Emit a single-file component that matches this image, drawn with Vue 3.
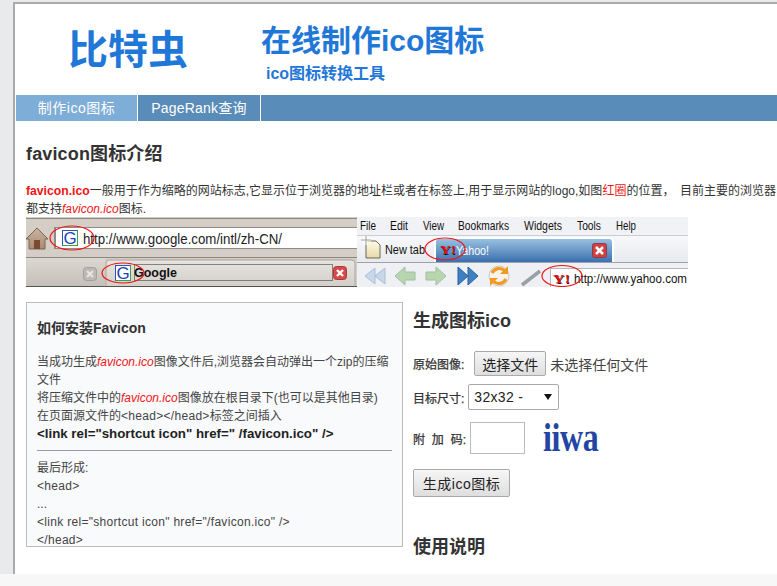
<template>
  <div class="page">
    <div class="shell">
      <div class="frame">
        <header class="masthead">
          <div class="brand">比特虫</div>
          <div class="titles">
            <h1>在线制作ico图标</h1>
            <h2>ico图标转换工具</h2>
          </div>
        </header>
        <nav class="nav">
          <a class="nav-item active">制作ico图标</a>
          <a class="nav-item second">PageRank查询</a>
        </nav>
        <main class="content">
          <h3 class="section-title intro-title">favicon图标介绍</h3>
          <p class="intro">
            <b class="red lead">favicon.ico</b>一般用于作为缩略的网站标志,它显示位于浏览器的地址栏或者在标签上,用于显示网站的logo,如图<span class="red">红圈</span>的位置，&nbsp; 目前主要的浏览器<br />都支持<i class="red">favicon.ico</i>图标.
          </p>
          <div class="shots">
            <svg class="shot" width="331" height="70" viewBox="0 0 331 70">
              <defs>
                <linearGradient id="tabOff" x1="0" y1="0" x2="0" y2="1"><stop offset="0" stop-color="#dcd8d2" /><stop offset="1" stop-color="#c4bfb8" /></linearGradient>
                <linearGradient id="tabOn" x1="0" y1="0" x2="0" y2="1"><stop offset="0" stop-color="#e8e5e0" /><stop offset="1" stop-color="#d2cec8" /></linearGradient>
                <linearGradient id="house" x1="0" y1="0" x2="0" y2="1"><stop offset="0" stop-color="#c9b4a0" /><stop offset="1" stop-color="#a98b72" /></linearGradient>
              </defs>
              <rect width="331" height="70" fill="#d4cec7" />
              <rect y="1" width="331" height="1" fill="#8c8882" />
              <rect x="28" y="10" width="303" height="22" fill="#8f8c88" />
              <rect x="30" y="11" width="301" height="20" fill="#fff" />
              <path d="M0 22 L11 11 L22 22 L19 22 L19 32 L3 32 L3 22 Z" fill="url(#house)" stroke="#7d6650" />
              <rect x="8" y="23" width="6" height="9" fill="#7a4a33" />
              <rect x="36.5" y="13.5" width="15" height="15" fill="#fff" stroke="#2a57b8" />
              <path d="M51.5 13.5 V28.5 H36.5" fill="none" stroke="#3aa34a" />
              <text class="g" x="37.5" y="27">G</text>
              <text class="url" x="57" y="27" textLength="199" lengthAdjust="spacingAndGlyphs">http://www.google.com/intl/zh-CN/</text>
              <rect y="40" width="331" height="1" fill="#8c8882" />
              <rect y="41" width="79" height="28" fill="url(#tabOff)" />
              <rect x="57.5" y="50.5" width="13" height="13" rx="3" fill="#bcb8b2" stroke="#a3a09a" />
              <path d="M61 54 L67 60 M67 54 L61 60" stroke="#e6e4e0" stroke-width="2.4" />
              <path d="M80 69 V46 Q80 43 83 43 H325 Q329 43 329 46 V69" fill="url(#tabOn)" stroke="#a9a69f" />
              <rect x="89.5" y="48.5" width="15" height="15" fill="#fff" stroke="#2a57b8" />
              <path d="M104.5 48.5 V63.5 H89.5" fill="none" stroke="#3aa34a" />
              <text class="g" x="90.5" y="62">G</text>
              <rect x="108.5" y="47.5" width="198" height="16" fill="none" stroke="#222" stroke-dasharray="1 1" />
              <text class="google" x="108" y="60" textLength="43" lengthAdjust="spacingAndGlyphs">Google</text>
              <rect x="307.5" y="49.5" width="13" height="13" rx="3" fill="#d84a4a" stroke="#a83a3a" />
              <path d="M311 53 L317 59 M317 53 L311 59" stroke="#fff" stroke-width="2.4" />
              <rect y="69" width="331" height="1" fill="#55524e" />
              <ellipse cx="46" cy="21" rx="22" ry="12" fill="none" stroke="#f01414" stroke-width="1.2" />
              <ellipse cx="97" cy="56" rx="21" ry="10" fill="none" stroke="#f01414" stroke-width="1.2" />
            </svg>
            <svg class="shot" width="331" height="70" viewBox="0 0 331 70">
              <defs>
                <linearGradient id="blueTab" x1="0" y1="0" x2="0" y2="1"><stop offset="0" stop-color="#9cc4e2" /><stop offset="1" stop-color="#3b6fae" /></linearGradient>
                <linearGradient id="pageIcon" x1="0" y1="0" x2="0" y2="1"><stop offset="0" stop-color="#fdfbe8" /><stop offset="1" stop-color="#e8d9a6" /></linearGradient>
                <linearGradient id="barBg" x1="0" y1="0" x2="0" y2="1"><stop offset="0" stop-color="#f7f8fa" /><stop offset="1" stop-color="#e8eaee" /></linearGradient>
              </defs>
              <rect width="331" height="18" fill="#f1f2f6" />
              <rect y="18" width="331" height="1" fill="#c9ccd2" />
              <rect y="19" width="331" height="26" fill="url(#barBg)" />
              <rect y="46" width="331" height="24" fill="#eef0f3" />
              <rect y="45" width="331" height="1" fill="#9da3ab" />
              <text class="menu" x="3" y="13" textLength="16" lengthAdjust="spacingAndGlyphs">File</text>
              <text class="menu" x="33" y="13" textLength="18" lengthAdjust="spacingAndGlyphs">Edit</text>
              <text class="menu" x="66" y="13" textLength="21" lengthAdjust="spacingAndGlyphs">View</text>
              <text class="menu" x="101" y="13" textLength="51" lengthAdjust="spacingAndGlyphs">Bookmarks</text>
              <text class="menu" x="167" y="13" textLength="38" lengthAdjust="spacingAndGlyphs">Widgets</text>
              <text class="menu" x="220" y="13" textLength="24" lengthAdjust="spacingAndGlyphs">Tools</text>
              <text class="menu" x="259" y="13" textLength="20" lengthAdjust="spacingAndGlyphs">Help</text>
              <path d="M9 24 H19 L23 28 V41 H9 Z" fill="url(#pageIcon)" stroke="#6d675a" />
              <path d="M4 23 H14 M9 19 V28" stroke="#fff" stroke-width="3" />
              <path d="M4 23 H14 M9 19 V28" stroke="#9a9a9a" stroke-width="1" />
              <text class="menu" x="28" y="37" textLength="40" lengthAdjust="spacingAndGlyphs">New tab</text>
              <path d="M78 45 V25 Q78 21 82 21 H252 Q256 21 256 25 V45" fill="url(#blueTab)" stroke="#fff" stroke-width="2" />
              <text class="yahoo" x="99" y="38" textLength="33" lengthAdjust="spacingAndGlyphs">Yahoo!</text>
              <rect x="235.5" y="26.5" width="14" height="14" rx="2" fill="#cf4040" stroke="#8f3a4a" />
              <path d="M239 30 L246 37 M246 30 L239 37" stroke="#fff" stroke-width="2.6" />
              <text class="yshadow" x="83.5" y="38" textLength="16" lengthAdjust="spacingAndGlyphs">Y!</text>
              <text class="yicon" x="83" y="37" textLength="16" lengthAdjust="spacingAndGlyphs">Y!</text>
              <g stroke="#a7bdd6" fill="#c6d8ea">
                <path d="M18 51 L8 59 L18 67 Z M28 51 L18 59 L28 67 Z" />
              </g>
              <path d="M38 59 L48 50 V55 H58 V63 H48 V68 Z" fill="#b7d6b0" stroke="#a4bca2" />
              <path d="M89 59 L79 50 V55 H69 V63 H79 V68 Z" fill="#b7d6b0" stroke="#a4bca2" />
              <g stroke="#2a5f9e" fill="#3f80c4">
                <path d="M101 50 L111 59 L101 68 Z M111 50 L121 59 L111 68 Z" />
              </g>
              <circle cx="142" cy="59" r="10" fill="#f7f3ea" stroke="#c9c9c9" />
              <path d="M135 56 A8 8 0 0 1 148 54 M149 62 A8 8 0 0 1 136 64" fill="none" stroke="#f09a22" stroke-width="3.2" />
              <path d="M151 49 V57 H143 Z M133 69 V61 H141 Z" fill="#f09a22" />
              <path d="M165 68 L183 54" stroke="#9aa0a8" stroke-width="3.5" />
              <rect x="193" y="51" width="138" height="19" fill="#fff" />
              <path d="M193.5 70 V51.5 H331" fill="none" stroke="#b2b6bc" />
              <text class="yshadow" x="196.5" y="67" textLength="17" lengthAdjust="spacingAndGlyphs">Y!</text>
              <text class="yicon" x="196" y="66" textLength="17" lengthAdjust="spacingAndGlyphs">Y!</text>
              <text class="url-y" x="217" y="66" textLength="113" lengthAdjust="spacingAndGlyphs">http://www.yahoo.com</text>
              <ellipse cx="88" cy="32" rx="20" ry="11" fill="none" stroke="#f01414" stroke-width="1.2" />
              <ellipse cx="205" cy="59" rx="20" ry="10.5" fill="none" stroke="#f01414" stroke-width="1.2" />
            </svg>
          </div>
          <div class="columns">
            <section class="howto">
              <h4>如何安装Favicon</h4>
              <div class="howto-lines">
                当成功生成<i class="red">favicon.ico</i>图像文件后,浏览器会自动弹出一个zip的压缩文件<br />
                将压缩文件中的<i class="red">favicon.ico</i>图像放在根目录下(也可以是其他目录)<br />
                在页面源文件的<span class="latin">&lt;head&gt;&lt;/head&gt;</span>标签之间插入<br />
                <b class="code">&lt;link rel="shortcut icon" href=" /favicon.ico" /&gt;</b>
                <hr />
                最后形成:<br />
                <span class="latin">&lt;head&gt;</span><br />
                ...<br />
                <span class="latin">&lt;link rel="shortcut icon" href="/favicon.ico" /&gt;</span><br />
                <span class="latin">&lt;/head&gt;</span>
              </div>
            </section>
            <section class="tool">
              <h3 class="section-title">生成图标ico</h3>
              <div class="field file-row">
                <label>原始图像:</label>
                <button class="btn file-btn" type="button">选择文件</button>
                <span class="no-file">未选择任何文件</span>
              </div>
              <div class="field size-row">
                <label>目标尺寸:</label>
                <div class="select">32x32 -<span class="caret"></span></div>
              </div>
              <div class="field code-row">
                <label class="spaced">附 加 码:</label>
                <input class="code-input" type="text" />
                <span class="captcha">iiwa</span>
              </div>
              <button class="btn submit" type="button">生成ico图标</button>
              <h3 class="section-title usage">使用说明</h3>
            </section>
          </div>
        </main>
      </div>
    </div>
  </div>
</template>

<script setup>
</script>

<style>
html, body { margin: 0; background: #f7f7f7; overflow: hidden; }
</style>

<style scoped>
.page {
  width: 777px;
  height: 586px;
  overflow: hidden;
  background: #f7f7f7;
  font-family: "Liberation Sans", "Noto Sans CJK SC", sans-serif;
  color: #333;
}
.shell {
  box-sizing: border-box;
  height: 574px;
  padding: 2px 0 0 13px;
  background: #e9eaeb;
}
.frame {
  box-sizing: border-box;
  height: 572px;
  display: flex;
  flex-direction: column;
  background: #fff;
  border-top: 2px solid #aaa;
  border-left: 2px solid #aaa;
}
.masthead {
  display: flex;
  flex: none;
  height: 91px;
  color: #1f78d8;
  font-weight: 700;
}
.brand {
  width: 246px;
  padding: 21px 0 0 53px;
  box-sizing: border-box;
  font-size: 40px;
  line-height: 50px;
}
.titles h1 {
  margin: 0;
  padding-top: 17px;
  font-size: 30px;
  line-height: 40px;
}
.titles h2 {
  margin: 0;
  padding: 1px 0 0 5px;
  font-size: 16px;
  line-height: 24px;
}
.nav {
  display: flex;
  flex: none;
  height: 26px;
  background: #5a8cba;
  margin-left: 1px;
}
.nav-item {
  box-sizing: border-box;
  height: 26px;
  border-right: 1px solid #fff;
  color: #fff;
  font-size: 14px;
  line-height: 26px;
  text-align: center;
}
.active { width: 122px; background: #7eadd8; letter-spacing: .5px; }
.second { width: 123px; letter-spacing: .2px; }
.content {
  flex: 1;
  min-height: 0;
  padding-left: 11px;
  overflow: hidden;
}
.section-title {
  margin: 0;
  font-size: 18px;
  line-height: 24px;
  font-weight: 700;
  color: #333;
}
.intro-title { padding-top: 21px; letter-spacing: .15px; }
.intro {
  margin: 16px 0 0;
  font-size: 12px;
  line-height: 18px;
  white-space: nowrap;
  word-spacing: -.5px;
  color: #333;
}
.lead { font-size: 12.2px; }
.red { color: #f01414; }
.shots { display: flex; height: 70px; margin-top: -1px; }
.shot { display: block; flex: none; }
.shot text { font-family: "Liberation Sans", sans-serif; }
.shot .g { font-size: 17px; fill: #1d3fb8; }
.shot .url { font-size: 14px; fill: #222; }
.shot .google { font-size: 13px; font-weight: 700; fill: #111; }
.shot .menu { font-size: 12px; fill: #111; }
.shot .yahoo { font-size: 12.5px; fill: #fff; }
.shot .yicon { font-family: "Liberation Serif", serif; font-size: 13px; font-weight: 700; fill: #e01010; }
.shot .yshadow { font-family: "Liberation Serif", serif; font-size: 13px; font-weight: 700; fill: #111; }
.shot .url-y { font-size: 12px; fill: #111; }
.columns {
  display: flex;
  margin-top: 15px;
  align-items: flex-start;
}
.howto {
  box-sizing: border-box;
  width: 377px;
  height: 245px;
  flex: none;
  overflow: hidden;
  border: 1px solid #bbb;
  background: #f9fafc;
  padding: 16px 10px 0;
}
.howto h4 {
  margin: 0;
  font-size: 14px;
  line-height: 18px;
  font-weight: 700;
  color: #333;
}
.howto-lines {
  margin-top: 16px;
  font-size: 12px;
  line-height: 18px;
  color: #444;
}
.latin { letter-spacing: .3px; }
.code { color: #222; font-size: 13.3px; }
.howto hr {
  border: 0;
  border-top: 1px solid #999;
  margin: 7px 0 8px;
  height: 0;
}
.tool {
  margin-left: 10px;
  width: 300px;
  flex: none;
}
.tool .section-title { line-height: 38px; }
.field {
  display: flex;
  align-items: center;
  font-size: 12px;
  color: #333;
}
.field label { white-space: pre; -webkit-text-stroke: .25px #333; }
.spaced { word-spacing: 3.5px; }
.btn {
  box-sizing: border-box;
  margin: 0;
  padding: 0;
  border: 1px solid #aaa;
  border-radius: 2px;
  background: linear-gradient(#f6f6f6, #dedede);
  font-family: inherit;
  font-size: 14px;
  color: #222;
}
.file-row { margin-top: 11px; height: 25px; }
.file-btn { width: 72px; height: 25px; margin-left: 10px; }
.no-file { margin-left: 4px; font-size: 14px; color: #444; }
.size-row { margin-top: 8px; height: 26px; }
.select {
  box-sizing: border-box;
  position: relative;
  width: 91px;
  height: 26px;
  margin-left: 4px;
  padding-left: 5px;
  border: 1px solid #aaa;
  border-radius: 2px;
  background: #fff;
  font-size: 14px;
  line-height: 24px;
  letter-spacing: .3px;
  color: #222;
}
.caret {
  position: absolute;
  right: 6px;
  top: 9px;
  border: 4px solid transparent;
  border-top: 6px solid #111;
  border-bottom: 0;
}
.code-row { margin-top: 12px; height: 32px; }
.code-input {
  box-sizing: border-box;
  width: 55px;
  height: 32px;
  margin: 0 0 0 4px;
  border: 1px solid #bbb;
  background: #fff;
}
.captcha {
  display: inline-block;
  margin-left: 18px;
  font-family: "Liberation Serif", serif;
  font-weight: 700;
  font-size: 40px;
  line-height: 32px;
  letter-spacing: -.5px;
  color: #2345a3;
  transform: scaleX(.8);
  transform-origin: left center;
}
.submit {
  display: block;
  width: 97px;
  height: 28px;
  margin-top: 15px;
  font-size: 14px;
  letter-spacing: .5px;
}
.tool .usage { margin-top: 31px; }
</style>
